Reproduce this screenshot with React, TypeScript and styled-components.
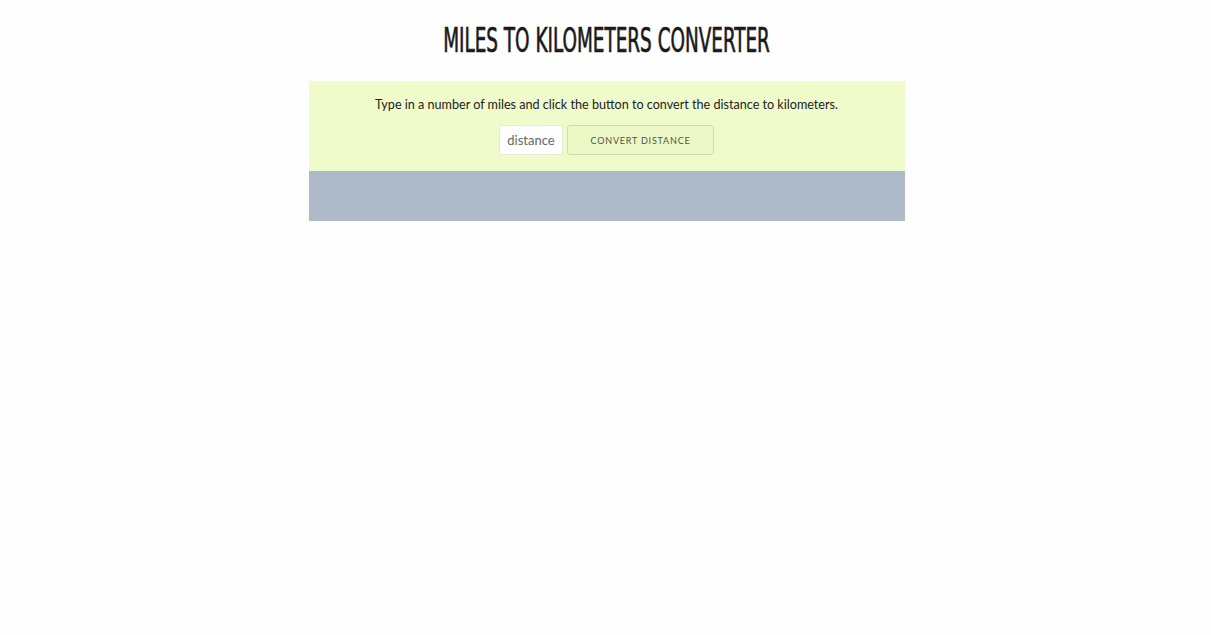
import React from "react";
import styled, { createGlobalStyle } from "styled-components";

const Global = createGlobalStyle`
  html, body { margin: 0; padding: 0; background: #fefefe; }
  body { font-family: "Lato", "Liberation Sans", sans-serif; }
`;

const Page = styled.main`
  display: flex;
  flex-direction: column;
  align-items: center;
  padding-top: 22px;
  padding-left: 2px;
`;

const Title = styled.h1`
  margin: 0;
  height: 36px;
  display: flex;
  align-items: center;
  justify-content: center;
  font-family: "Liberation Sans Narrow", "DejaVu Sans Condensed", "Liberation Sans", sans-serif;
  font-weight: 400;
  font-size: 33px;
  color: #1a1a1a;
  -webkit-text-stroke: 0.7px #1a1a1a;
  transform: scaleX(0.62);
  white-space: nowrap;
`;

const Panel = styled.section`
  margin-top: 23px;
  width: 596px;
  display: flex;
  flex-direction: column;
`;

const Top = styled.div`
  background: #effbcb;
  height: 90px;
  box-sizing: border-box;
  padding-top: 15px;
  display: flex;
  flex-direction: column;
  align-items: center;
`;

const Intro = styled.p`
  margin: 0;
  font-family: "Lato", sans-serif;
  font-size: 12.6px;
  line-height: 18px;
  color: #222;
`;

const Row = styled.div`
  margin-top: 11px;
  display: flex;
  gap: 4px;
`;

const Input = styled.input`
  box-sizing: border-box;
  width: 64px;
  height: 30px;
  border: 1px solid #e4ecd6;
  border-radius: 2px;
  background: #fff;
  font-family: "Lato", sans-serif;
  font-size: 13px;
  color: #555;
  text-align: center;
  padding: 0;
  outline: none;
  &::placeholder { color: #666; }
`;

const Button = styled.button`
  box-sizing: border-box;
  width: 147px;
  height: 30px;
  border: 1px solid #cfdcb0;
  border-radius: 3px;
  background: #ecf9c6;
  font-family: "Lato", sans-serif;
  font-size: 9px;
  letter-spacing: 0.8px;
  color: #4e5444;
  cursor: pointer;
`;

const Bottom = styled.div`
  background: #adbac7;
  height: 50px;
`;

export default function App() {
  return (
    <>
      <Global />
      <Page>
        <Title>MILES TO KILOMETERS CONVERTER</Title>
        <Panel>
          <Top>
            <Intro>Type in a number of miles and click the button to convert the distance to kilometers.</Intro>
            <Row>
              <Input placeholder="distance" />
              <Button>CONVERT DISTANCE</Button>
            </Row>
          </Top>
          <Bottom />
        </Panel>
      </Page>
    </>
  );
}
